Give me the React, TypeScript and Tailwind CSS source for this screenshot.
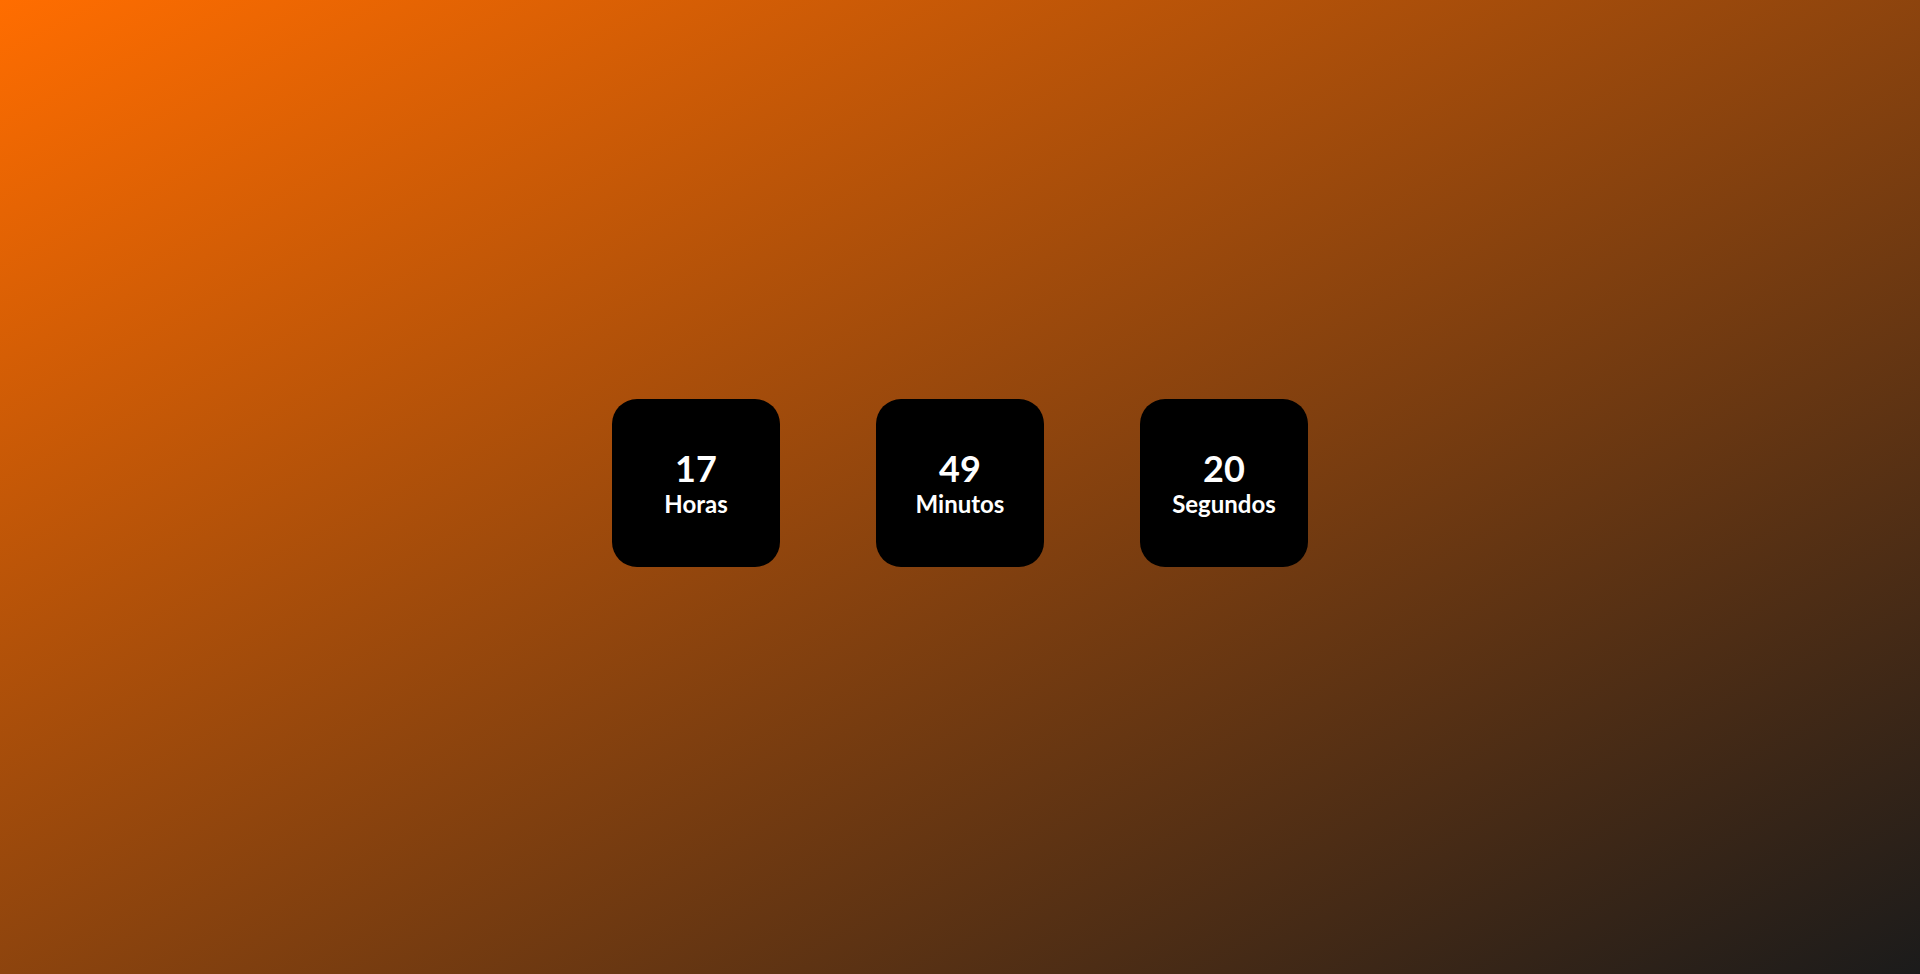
import React from "react";

const units = [
  { value: "17", label: "Horas" },
  { value: "49", label: "Minutos" },
  { value: "20", label: "Segundos" },
];

const App: React.FC = () => {
  return (
    <div className="h-screen w-full flex items-center justify-center pb-2 bg-[linear-gradient(to_bottom_right,#ff6d00,#1b1b1b)] font-['Lato','Liberation_Sans',sans-serif]">
      <div className="flex gap-[96px]">
        {units.map((u) => (
          <div
            key={u.label}
            className="w-[168px] h-[168px] rounded-[25px] bg-black flex flex-col items-center justify-center text-white font-bold"
          >
            <span className="text-[36px] leading-[1.2]">{u.value}</span>
            <span className="text-[24px] leading-[1.2]">{u.label}</span>
          </div>
        ))}
      </div>
    </div>
  );
};

export default App;
